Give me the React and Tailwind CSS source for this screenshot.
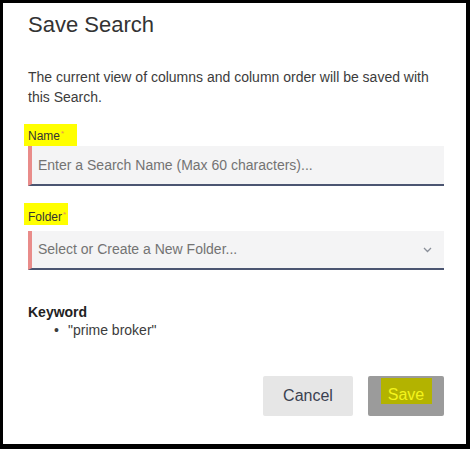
import React from 'react'

export default function App() {
  return (
    <div className="w-[470px] h-[449px] bg-black pt-[3px] pl-[3px] pr-[4px] pb-[5px] font-[family-name:Liberation_Sans,Arial,sans-serif]">
      <div className="h-full bg-white pl-[25px] pr-[22px]">
        <h1 className="pt-[9px] text-[22px] leading-[26px] text-[#333333] font-normal">Save Search</h1>

        <p className="mt-[29px] text-[14px] leading-[20px] text-[#3c3c3c]">
          The current view of columns and column order will be saved with this Search.
        </p>

        {/* Name field */}
        <div className="mt-[17px] -ml-[4px] w-[53px] h-[22px] bg-[#ffff00] pl-[4px] pt-[5px] text-[12px] leading-[14px] text-[#333333]">
          Name<span className="relative -top-[4px] ml-[1px] text-[8px] text-[#e3905a]">*</span>
        </div>
        <div className="h-[40px] flex items-center bg-[#f4f4f5] border-l-4 border-l-[#e98c8a] border-b-2 border-b-[#4b5571] pl-[6px]">
          <input
            className="w-full bg-transparent outline-none text-[14px] text-[#333] placeholder:text-[#737373]"
            placeholder="Enter a Search Name (Max 60 characters)..."
          />
        </div>

        {/* Folder field */}
        <div className="mt-[17px] -ml-[4px] w-[44px] h-[22px] bg-[#ffff00] pl-[4px] pt-[7px] text-[12px] leading-[14px] text-[#333333]">
          Folder<span className="relative -top-[4px] ml-[1px] text-[8px] text-[#e3905a]">*</span>
        </div>
        <div className="mt-[6px] h-[39px] flex items-center justify-between bg-[#f4f4f5] border-l-4 border-l-[#e98c8a] border-b-2 border-b-[#4b5571] pl-[6px] pr-[12px]">
          <span className="text-[14px] text-[#737373]">Select or Create a New Folder...</span>
          <svg width="9" height="6" viewBox="0 0 9 6" fill="none">
            <path d="M1 1l3.5 3.5L8 1" stroke="#8a8f99" strokeWidth="1.3" />
          </svg>
        </div>

        {/* Keyword */}
        <div className="mt-[33px] text-[14px] leading-[18px] font-bold text-[#222]">Keyword</div>
        <div className="flex text-[14px] leading-[18px] text-[#3c3c3c] pl-[26px]">
          <span className="w-[14px]">•</span>
          <span>"prime broker"</span>
        </div>

        {/* Actions */}
        <div className="mt-[37px] flex justify-end gap-[15px]">
          <button className="w-[90px] h-[40px] rounded-[2px] bg-[#e6e6e6] text-[16px] text-[#3a4150] flex items-center justify-center">
            Cancel
          </button>
          <button className="w-[76px] h-[40px] rounded-[2px] bg-[#9b9b9b] flex justify-center items-start pt-[2px]">
            <span className="block w-[51px] h-[26px] bg-[#b3b300] text-[16px] leading-[16px] pt-[9px] text-[#f4f41c] text-center">
              Save
            </span>
          </button>
        </div>
      </div>
    </div>
  )
}
